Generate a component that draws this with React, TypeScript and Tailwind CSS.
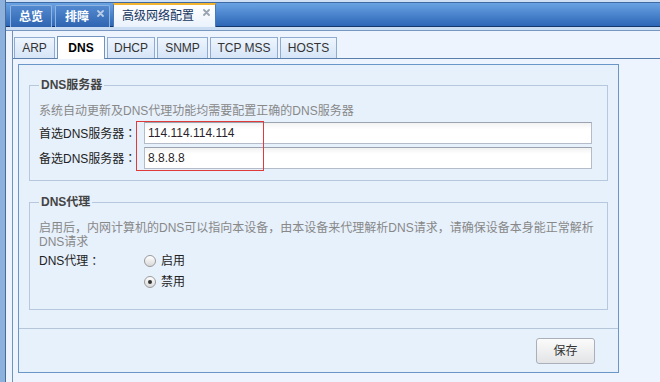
import { useState } from 'react';

const font = "font-['Liberation_Sans','Noto_Sans_CJK_SC',sans-serif]";

const CloseIcon = ({ color }: { color: string }) => (
  <svg width="7" height="7" viewBox="0 0 7 7" className="shrink-0">
    <path d="M1 1 L6 6 M6 1 L1 6" stroke={color} strokeWidth="1.8" strokeLinecap="round" />
  </svg>
);

const subTabs = [
  { name: 'ARP', w: 'w-[41px]' },
  { name: 'DNS', w: 'w-[48px]' },
  { name: 'DHCP', w: 'w-[48px]' },
  { name: 'SNMP', w: 'w-[51px]' },
  { name: 'TCP MSS', w: 'w-[68px]' },
  { name: 'HOSTS', w: 'w-[57px]' },
];

// centred full-width colon, as in the original UI font
const Colon = () => <span className="font-['Noto_Sans_CJK_JP',sans-serif]">：</span>;

const Radio = ({ checked, label, onClick }: { checked: boolean; label: string; onClick: () => void }) => (
  <label onClick={onClick} className="flex items-center h-[21px] cursor-pointer">
    <span className="w-[12px] h-[12px] rounded-full border border-[#9a9a9a] bg-gradient-to-b from-[#ffffff] to-[#d9d9d9] flex items-center justify-center">
      {checked && <span className="w-[4px] h-[4px] rounded-full bg-[#333]" />}
    </span>
    <span className="ml-[5px] text-[#222]">{label}</span>
  </label>
);

const App = () => {
  const [tab, setTab] = useState('DNS');
  const [primary, setPrimary] = useState('114.114.114.114');
  const [secondary, setSecondary] = useState('8.8.8.8');
  const [proxy, setProxy] = useState(false);

  return (
    <div className={`w-[660px] h-[382px] flex overflow-hidden relative text-[12px] ${font}`}>
      {/* left strip */}
      <div className="w-[6px] h-full bg-[#8db1dd] border-r border-[#4b6c97]" />

      <div className="flex-1 flex flex-col">
        {/* top bar */}
        <div className="h-[27px] pt-[2px] bg-[#cfe0f4]">
          <div className="h-[25px] border-t border-[#3d6aa3] border-b border-b-[#15366a] bg-gradient-to-b from-[#6aa3e3] to-[#2c66b6] flex items-end pl-[4px] gap-[3px]">
            <div className="w-[42px] h-[22px] mb-[-1px] border border-b-0 border-[#8fb4e0] rounded-t-[2px] bg-gradient-to-b from-[#5289cf] to-[#2f65b1] flex items-center justify-center text-white font-bold">
              总览
            </div>
            <div className="w-[55px] h-[22px] mb-[-1px] border border-b-0 border-[#8fb4e0] rounded-t-[2px] bg-gradient-to-b from-[#5289cf] to-[#2f65b1] flex items-center pl-[9px] text-white font-bold">
              <span>排障</span>
              <span className="ml-auto mr-[5px] self-start mt-[4px]"><CloseIcon color="#b9cde6" /></span>
            </div>
            <div className="w-[103px] h-[24px] mb-[-1px] border-t-2 border-t-[#f3b52f] border-x border-x-[#4b78b4] bg-gradient-to-b from-[#ffffff] to-[#eaf2fc] flex items-center pl-[8px] text-[#17365f]">
              <span>高级网络配置</span>
              <span className="ml-auto mr-[5px] self-start mt-[4px]"><CloseIcon color="#9aa4b0" /></span>
            </div>
          </div>
        </div>
        <div className="h-[4px] bg-[#cadcf1] border-b border-[#7797c1]" />

        {/* body */}
        <div className="flex-1 bg-[#edf4fd] pl-[6px] flex">
          <div className="flex-1 border-l border-[#7192bd] flex flex-col">
            {/* sub tabs */}
            <div className="h-[28px] pt-[6px] pl-[1px] flex items-end gap-[2px] border-b border-[#5b7fac]">
              {subTabs.map((t) => {
                const active = t.name === tab;
                return (
                  <button
                    key={t.name}
                    onClick={() => setTab(t.name)}
                    className={
                      active
                        ? `${t.w} h-[23px] mb-[-1px] border border-b-0 border-[#7494c0] bg-white font-bold text-black flex items-center justify-center`
                        : `${t.w} h-[21px] border border-b-0 border-[#90abd0] bg-gradient-to-b from-[#eef5fd] to-[#d6e5f7] text-[#333] flex items-center justify-center`
                    }
                  >
                    {t.name}
                  </button>
                );
              })}
            </div>

            {/* panel */}
            <div className="pt-[5px] pl-[5px]">
              <div className="w-[601px] h-[309px] border border-[#6b97c8] bg-[#e7f1fc] flex flex-col">
                <div className="px-[10px] pt-[12px]">
                  <fieldset className="border border-[#b7c8dc] pl-[9px] pr-[13px] pb-[11px]">
                    <legend className="px-[2px] font-bold text-[#444] leading-[16px]">DNS服务器</legend>
                    <div className="leading-[16px] text-[#888] mt-[10px]">系统自动更新及DNS代理功能均需要配置正确的DNS服务器</div>
                    <div className="mt-[3px] flex flex-col gap-[3px]">
                      <div className="flex items-center">
                        <span className="w-[105px] text-[#222]">首选DNS服务器<Colon /></span>
                        <input
                          value={primary}
                          onChange={(e) => setPrimary(e.target.value)}
                          className="w-[448px] h-[22px] border border-[#b3bcc8] border-t-[#9aa3ae] bg-gradient-to-b from-[#f2f2f2] to-white to-[30%] px-[3px] text-[#2a1f2a] outline-none"
                        />
                      </div>
                      <div className="flex items-center">
                        <span className="w-[105px] text-[#222]">备选DNS服务器<Colon /></span>
                        <input
                          value={secondary}
                          onChange={(e) => setSecondary(e.target.value)}
                          className="w-[448px] h-[22px] border border-[#b3bcc8] border-t-[#9aa3ae] bg-gradient-to-b from-[#f2f2f2] to-white to-[30%] px-[3px] text-[#2a1f2a] outline-none"
                        />
                      </div>
                    </div>
                  </fieldset>

                  <fieldset className="mt-[13px] border border-[#b7c8dc] pl-[9px] pr-[13px] pb-[17px]">
                    <legend className="px-[2px] font-bold text-[#444] leading-[16px]">DNS代理</legend>
                    <div className="leading-[14px] text-[#888] mt-[11px] whitespace-nowrap">
                      启用后，内网计算机的DNS可以指向本设备，由本设备来代理解析DNS请求，请确保设备本身能正常解析
                      <br />
                      DNS请求
                    </div>
                    <div className="mt-[1px] flex">
                      <span className="w-[105px] h-[21px] flex items-center text-[#222]">DNS代理<Colon /></span>
                      <div className="flex flex-col">
                        <Radio checked={proxy} label="启用" onClick={() => setProxy(true)} />
                        <Radio checked={!proxy} label="禁用" onClick={() => setProxy(false)} />
                      </div>
                    </div>
                  </fieldset>
                </div>

                <div className="mt-auto h-[44px] border-t border-[#b5c6da] flex items-center justify-end pr-[23px]">
                  <button className="w-[59px] h-[26px] rounded-[3px] border border-[#a9b0ba] bg-gradient-to-b from-[#fbfbfb] to-[#e3e4e6] text-[#333]">
                    保存
                  </button>
                </div>
              </div>
            </div>
          </div>
        </div>
      </div>

      {/* red annotation box */}
      <div className="absolute left-[136px] top-[121px] w-[128px] h-[50px] border border-[#e03a3a] pointer-events-none" />
    </div>
  );
};

export default App;
